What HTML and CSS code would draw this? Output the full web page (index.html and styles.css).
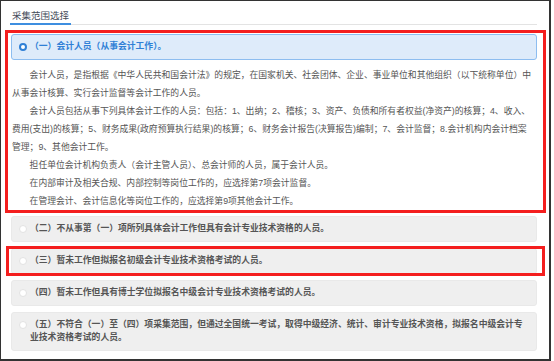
FILE: index.html
```html
<!DOCTYPE html>
<html lang="zh-CN">
<head>
    <meta charset="UTF-8">
    <meta name="viewport" content="width=device-width, initial-scale=1.0">
    <title>采集范围选择</title>
    <link rel="stylesheet" href="styles.css">
</head>
<body>
<div class="frame">
    <div class="tabs">
        <span class="tab">采集范围选择</span>
    </div>

    <div class="scope marked">
        <div class="option active">
            <span class="radio"></span>
            <span class="option-text">（一）会计人员（从事会计工作）。</span>
        </div>
        <div class="desc">
            <p>会计人员，是指根据《中华人民共和国会计法》的规定，在国家机关、社会团体、企业、事业单位和其他组织（以下统称单位）中从事会计核算、实行会计监督等会计工作的人员。</p>
            <p>会计人员包括从事下列具体会计工作的人员：包括：1、出纳；2、稽核；3、资产、负债和所有者权益(净资产)的核算；4、收入、费用(支出)的核算；5、财务成果(政府预算执行结果)的核算；6、财务会计报告(决算报告)编制；7、会计监督；8.会计机构内会计档案<br>管理；9、其他会计工作。</p>
            <p>担任单位会计机构负责人（会计主管人员）、总会计师的人员，属于会计人员。</p>
            <p>在内部审计及相关合规、内部控制等岗位工作的，应选择第7项会计监督。</p>
            <p>在管理会计、会计信息化等岗位工作的，应选择第9项其他会计工作。</p>
        </div>
    </div>

    <div class="option">
        <span class="radio"></span>
        <span class="option-text">（二）不从事第（一）项所列具体会计工作但具有会计专业技术资格的人员。</span>
    </div>

    <div class="option marked">
        <span class="radio"></span>
        <span class="option-text">（三）暂未工作但拟报名初级会计专业技术资格考试的人员。</span>
    </div>

    <div class="option">
        <span class="radio"></span>
        <span class="option-text">（四）暂未工作但具有博士学位拟报名中级会计专业技术资格考试的人员。</span>
    </div>

    <div class="option">
        <span class="radio"></span>
        <span class="option-text">（五）不符合（一）至（四）项采集范围，但通过全国统一考试，取得中级经济、统计、审计专业技术资格，拟报名中级会计专业技术资格考试的人员。</span>
    </div>
</div>
</body>
</html>
```

FILE: styles.css
```css
* {
    margin: 0;
    padding: 0;
    box-sizing: border-box;
}

body {
    background: #fff;
    font-family: 'Liberation Sans', 'Noto Sans CJK SC', sans-serif;
    font-size: 8.8px;
    color: #555;
}

.frame {
    width: 551px;
    height: 361px;
    border-style: solid;
    border-color: #333;
    border-width: 1px 2px 2px 1px;
    padding: 0 12px 0 10px;
}

.tabs {
    display: flex;
    border-bottom: 1px solid #e3e3e3;
    margin-left: -1px;
}

.tab {
    padding: 8px 2px 0;
    line-height: 14px;
    font-size: 9.5px;
    color: #434a58;
    border-bottom: 2px solid #3d8ee0;
    margin-bottom: -1px;
}

.scope {
    margin-top: 9px;
}

/* red annotation boxes drawn over the content */
.marked {
    position: relative;
}

.marked::after {
    content: '';
    position: absolute;
    top: -4px;
    right: -9px;
    bottom: -3px;
    left: -6px;
    border: 3px solid #f41e1e;
    pointer-events: none;
}

.option.marked::after {
    top: -3px;
    bottom: -3px;
}

.option {
    display: flex;
    align-items: flex-start;
    gap: 3px;
    margin-top: 6px;
    padding: 5px 6px 6px 7px;
    line-height: 13px;
    font-weight: 700;
    background: #efefef;
    border: 1px solid #e9e9e9;
    border-radius: 3px;
}

.scope .option {
    margin-top: 0;
}

.option.active {
    background: #deebfa;
    border-color: #8dbdf0;
    color: #2f7fd6;
}

.radio {
    flex: none;
    width: 8px;
    height: 8px;
    margin-top: 2.5px;
    border-radius: 50%;
    background: #fff;
    border: 1px solid #e2e2e2;
}

.option.active .radio {
    background: #fff;
    border: 2.5px solid #2f7fd6;
}

.desc {
    padding: 6px 0 0 1px;
    line-height: 18px;
}

.desc p {
    text-indent: 2em;
}
```
